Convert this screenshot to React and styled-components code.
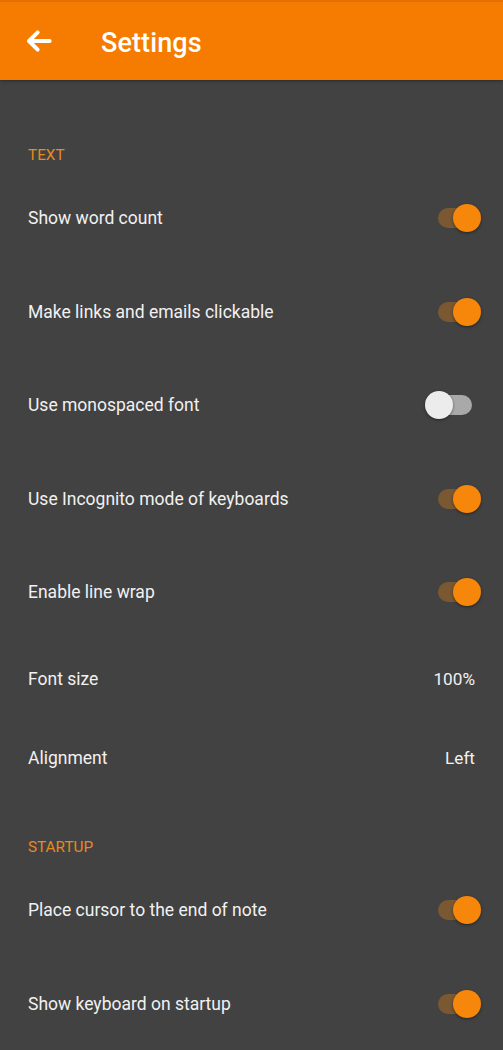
import styled, { createGlobalStyle } from "styled-components";

const Global = createGlobalStyle`
  html, body {
    margin: 0;
    padding: 0;
    background: #424242;
    font-family: Roboto, "Noto Sans", sans-serif;
  }
`;

const Page = styled.div`
  width: 503px;
  min-height: 1050px;
  background: #424242;
  overflow: hidden;
`;

const AppBar = styled.header`
  height: 78px;
  border-top: 2px solid #e56f00;
  background: #f57c00;
  display: flex;
  align-items: center;
  padding-left: 22px;
  box-shadow: 0 1px 3px rgba(0, 0, 0, 0.35);
`;

const BackButton = styled.div`
  width: 34px;
  height: 34px;
  display: flex;
  align-items: center;
  justify-content: center;
  margin-top: 0;
`;

const Title = styled.h1`
  margin: 4px 0 0 45px;
  color: #fff;
  font-size: 27px;
  font-weight: 500;
  letter-spacing: 0.1px;
`;

const List = styled.div`
  display: flex;
  flex-direction: column;
`;

const SectionLabel = styled.div`
  padding: ${(p) => p.$top}px 28px ${(p) => p.$bottom}px;
  line-height: 22px;
  color: #e98a1f;
  font-size: 15.3px;
`;

const Row = styled.div`
  height: ${(p) => p.$h}px;
  display: flex;
  align-items: center;
  justify-content: space-between;
  padding: 0 ${(p) => (p.$switch ? 20 : 28)}px 0 28px;
  box-sizing: border-box;
`;

const RowText = styled.span`
  color: #f1f1f1;
  font-size: 17.5px;
`;

const Value = styled.span`
  color: #f1f1f1;
  font-size: 17.2px;
`;

const Switch = styled.div`
  position: relative;
  width: 48px;
  height: 30px;
`;

const Track = styled.div`
  position: absolute;
  left: 3px;
  top: 5px;
  width: 34px;
  height: 20px;
  border-radius: 10px;
  background: ${(p) => (p.$on ? "#7a5832" : "#a9a9a9")};
`;

const Thumb = styled.div`
  position: absolute;
  top: 1px;
  left: ${(p) => (p.$on ? 18 : -10)}px;
  width: 28px;
  height: 28px;
  border-radius: 50%;
  background: ${(p) => (p.$on ? "#f6870b" : "#ececec")};
  box-shadow: 0 1px 3px rgba(0, 0, 0, 0.45);
`;

const Toggle = ({ on }) => (
  <Switch>
    <Track $on={on} />
    <Thumb $on={on} />
  </Switch>
);

const ArrowIcon = () => (
  <svg width="32" height="32" viewBox="0 0 24 24">
    <path
      d="M20 12H5M11 5.5L4.5 12 11 18.5"
      fill="none"
      stroke="#fff"
      strokeWidth="3"
      strokeLinecap="round"
      strokeLinejoin="round"
    />
  </svg>
);

const textItems = [
  ["Show word count", true],
  ["Make links and emails clickable", true],
  ["Use monospaced font", false],
  ["Use Incognito mode of keyboards", true],
  ["Enable line wrap", true],
];

const startupItems = [
  ["Place cursor to the end of note", true],
  ["Show keyboard on startup", true],
];

export default function App() {
  return (
    <Page>
      <Global />
      <AppBar>
        <BackButton>
          <ArrowIcon />
        </BackButton>
        <Title>Settings</Title>
      </AppBar>
      <List>
        <SectionLabel $top={64} $bottom={5.25}>TEXT</SectionLabel>
        {textItems.map(([label, on]) => (
          <Row key={label} $h={93.5} $switch>
            <RowText>{label}</RowText>
            <Toggle on={on} />
          </Row>
        ))}
        <Row $h={80}>
          <RowText>Font size</RowText>
          <Value>100%</Value>
        </Row>
        <Row $h={79}>
          <RowText>Alignment</RowText>
          <Value>Left</Value>
        </Row>
        <SectionLabel $top={38} $bottom={5.75}>STARTUP</SectionLabel>
        {startupItems.map(([label, on]) => (
          <Row key={label} $h={93.5} $switch>
            <RowText>{label}</RowText>
            <Toggle on={on} />
          </Row>
        ))}
      </List>
    </Page>
  );
}
